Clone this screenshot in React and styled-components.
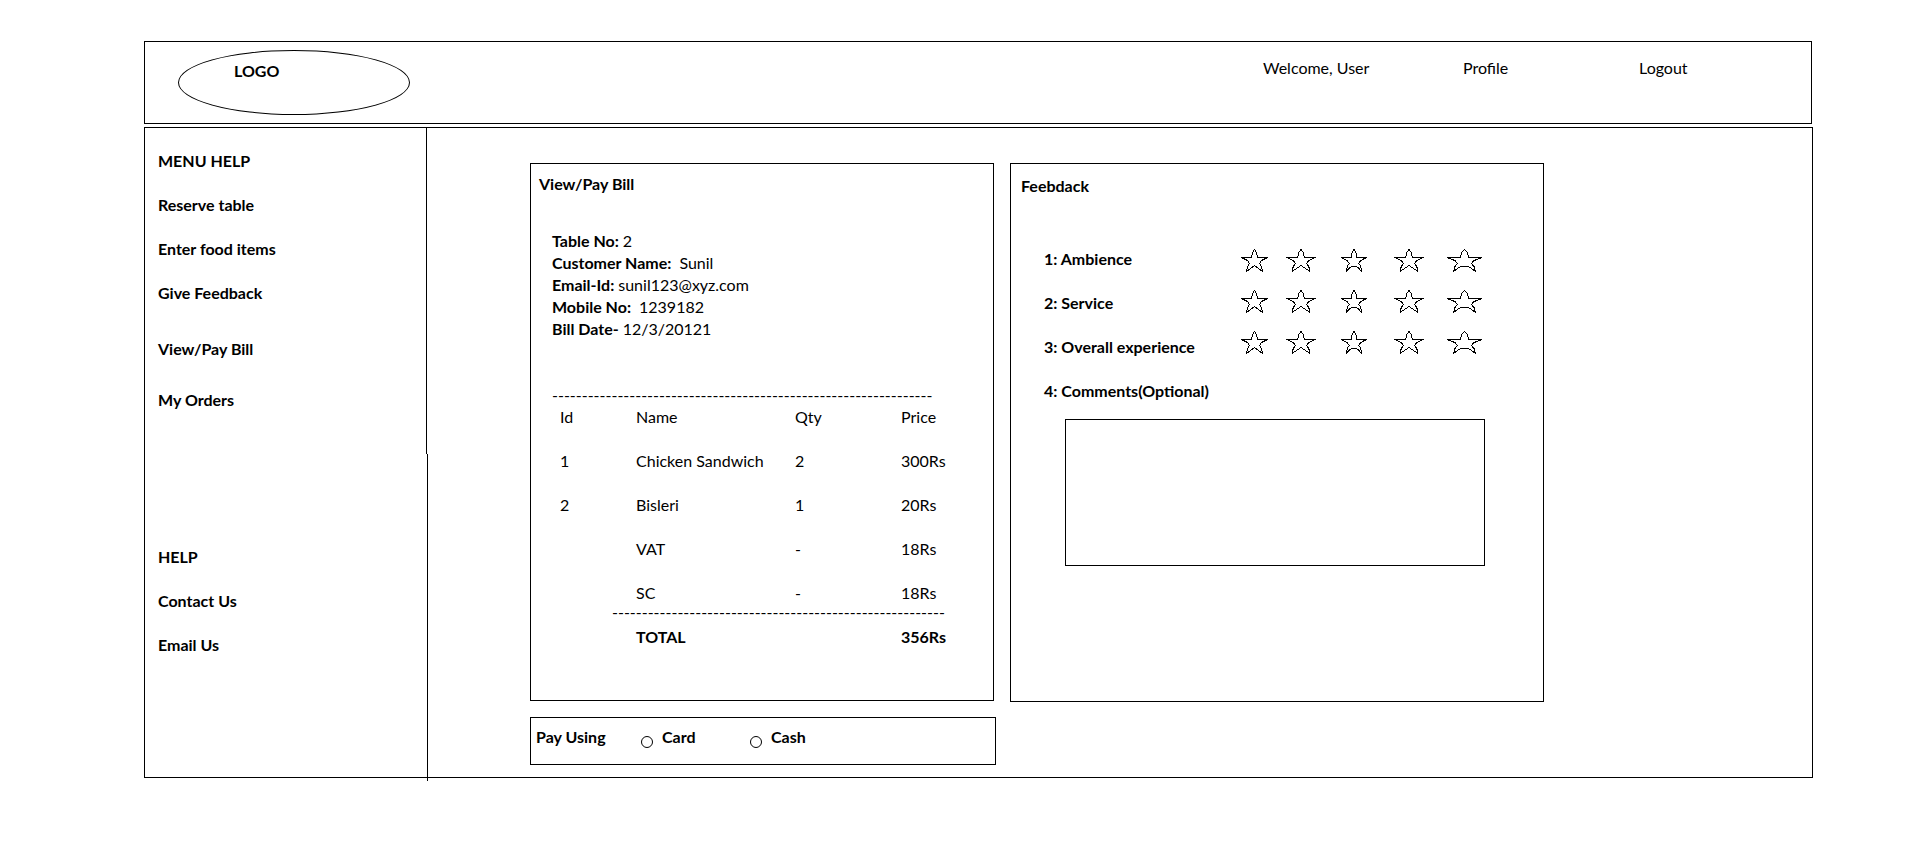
import React from "react";
import styled, { createGlobalStyle } from "styled-components";

const GlobalStyle = createGlobalStyle`
  *, *::before, *::after { box-sizing: border-box; }
  body {
    margin: 0;
    background: #fff;
    color: #000;
    font-family: Lato, "Liberation Sans", sans-serif;
    font-size: 16px;
    line-height: 22px;
  }
  h1, h2, ul, dl, dd, p { margin: 0; padding: 0; font-size: inherit; }
  ul { list-style: none; }
  a { color: inherit; text-decoration: none; }
`;

const Page = styled.div`
  display: flex;
  flex-direction: column;
  gap: 3px;
  padding: 41px 101px 61px 144px;
`;

const Header = styled.header`
  display: flex;
  justify-content: space-between;
  align-items: flex-start;
  min-height: 83px;
  margin-right: 1px;
  padding-left: 33px;
  border: 1px solid #000;
`;

const Logo = styled.h1`
  width: 232px;
  height: 65px;
  margin-top: 8px;
  padding: 9px 55px;
  border: 1px solid #000;
  border-radius: 50%;
  font-weight: 700;
`;

const UserNav = styled.nav`
  display: grid;
  grid-template-columns: 200px 176px 172px;
  padding-top: 15px;
`;

const Frame = styled.main`
  display: flex;
  align-items: stretch;
  border: 1px solid #000;
`;

const Sidebar = styled.aside`
  flex: none;
  display: flex;
  flex-direction: column;
  width: 283px;
  margin-bottom: -4px;
  font-weight: 700;
`;

const SideSection = styled.nav`
  width: ${(p) => (p.$narrow ? "282px" : "283px")};
  min-height: ${(p) => (p.$narrow ? "326px" : "327px")};
  padding: ${(p) => p.$top} 13px 0;
  border-right: 1px solid #000;
`;

const MenuList = styled.ul`
  display: flex;
  flex-direction: column;
  gap: ${(p) => p.$gap};
  margin-top: ${(p) => p.$space || 0};
`;

const Content = styled.div`
  flex: 1;
  display: grid;
  grid-template-columns: minmax(0, 466fr) minmax(0, 534fr) minmax(0, 254fr);
  column-gap: 14px;
  align-items: start;
  padding: 35px 0 12px 102px;
`;

const BillColumn = styled.div`
  display: flex;
  flex-direction: column;
  gap: 16px;
`;

const Panel = styled.section`
  min-height: 538px;
  border: 1px solid #000;
`;

const BillPanel = styled(Panel)`
  margin-right: 2px;
  padding: 9px 21px;
`;

const FeedbackPanel = styled(Panel)`
  min-height: 539px;
  padding: 11px 10px;
`;

const PanelTitle = styled.h2`
  font-weight: 700;
  margin-left: ${(p) => p.$outdent || 0};
`;

const Details = styled.dl`
  margin-top: 35px;
`;

const Detail = styled.div`
  display: flex;
  gap: ${(p) => (p.$wide ? "8px" : "4px")};

  dt { font-weight: 700; }
`;

const Dashes = styled.div`
  overflow: hidden;
  white-space: nowrap;
  margin-top: 44px;
`;

const BillTable = styled.table`
  width: 400px;
  table-layout: fixed;
  border-collapse: collapse;

  th, td {
    padding: 0 0 22px;
    text-align: left;
    vertical-align: top;
    font-weight: inherit;
    white-space: nowrap;
  }
`;

const IdColumn = styled.col`width: 60px;`;
const IndentColumn = styled.col`width: 24px;`;
const NameColumn = styled.col`width: 159px;`;
const QtyColumn = styled.col`width: 106px;`;

const IdCell = styled.td`
  && { padding-left: 8px; }
`;

const LastRow = styled.tr`
  && td { padding-bottom: 0; }
`;

const DashRow = styled.tr`
  && td {
    padding-bottom: 6px;
    line-height: 16px;
  }
`;

const TotalRow = styled.tr`
  font-weight: 700;
`;

const PayPanel = styled.form`
  display: flex;
  align-items: flex-start;
  min-height: 48px;
  padding: 8px 5px;
  border: 1px solid #000;
  font-weight: 700;
`;

const PayLegend = styled.span`
  width: 105px;
`;

const PayOption = styled.label`
  display: flex;
  gap: 9px;
  width: 109px;

  input {
    appearance: none;
    width: 12px;
    height: 12px;
    margin: 10px 0 0;
    border: 1px solid #000;
    border-radius: 50%;
  }
  input:checked { background: #000; }
`;

const Questions = styled.div`
  display: flex;
  padding: 51px 50px 0 23px;
  font-weight: 700;
`;

const QuestionList = styled.div`
  display: flex;
  flex-direction: column;
  gap: 22px;
  width: 207px;
  white-space: nowrap;
`;

const RatingList = styled.div`
  display: flex;
  flex-direction: column;
  gap: 17px;
`;

const Rating = styled.div`
  display: flex;
  align-items: center;
  height: 24px;
`;

const StarOption = styled.label`
  position: relative;
  display: block;
  width: ${(p) => p.$width}px;
  height: 23px;
  margin-right: ${(p) => p.$gap}px;

  svg { display: block; }
  input {
    position: absolute;
    inset: 0;
    width: 100%;
    height: 100%;
    margin: 0;
    opacity: 0;
  }
`;

const Comments = styled.textarea`
  display: block;
  width: calc(100% - 92px);
  height: 147px;
  margin: 17px 0 0 44px;
  border: 1px solid #000;
  background: #fff;
  font: inherit;
  resize: none;
`;

const stars = [
  { width: 27, gap: 18 },
  { width: 30, gap: 25 },
  { width: 26, gap: 27, flat: true },
  { width: 30, gap: 22 },
  { width: 37, gap: 0, flat: true },
];

const details = [
  ["Table No:", "2", false],
  ["Customer Name:", "Sunil", true],
  ["Email-Id:", "sunil123@xyz.com", false],
  ["Mobile No:", "1239182", true],
  ["Bill Date-", "12/3/20121", false],
];

const items = [
  ["1", "Chicken Sandwich", "2", "300Rs"],
  ["2", "Bisleri", "1", "20Rs"],
  ["", "VAT", "-", "18Rs"],
];

const questions = ["1: Ambience", "2: Service", "3: Overall experience"];

function Star({ width, flat }) {
  const base = flat
    ? "L17.5 18.5L15.5 17.5H11.5L9.5 18.5"
    : "L17.5 19.5L13.5 16.5L9.5 19.5";
  return (
    <svg
      width={width}
      height="23"
      viewBox="0 0 27 23"
      preserveAspectRatio="none"
      fill="none"
      stroke="#000"
      shapeRendering="crispEdges"
      aria-hidden="true"
    >
      <path
        vectorEffect="non-scaling-stroke"
        d={`M13.5 .5L15.500 3.500L16.500 8.500H26.500L20.500 11.500L18.500 14.500L20.500 17.500L21.500 22.500${base}L5.500 22.500L6.500 17.500L8.500 14.500L6.500 11.500L.5 8.500H10.500L11.500 3.500Z`}
      />
    </svg>
  );
}

function Links({ names, gap, space }) {
  return (
    <MenuList $gap={gap} $space={space}>
      {names.map((name) => (
        <li key={name}>
          <a href="#">{name}</a>
        </li>
      ))}
    </MenuList>
  );
}

export default function App() {
  return (
    <>
      <GlobalStyle />
      <Page>
        <Header>
          <Logo>LOGO</Logo>
          <UserNav>
            <span>Welcome, User</span>
            <a href="#">Profile</a>
            <a href="#">Logout</a>
          </UserNav>
        </Header>
        <Frame>
          <Sidebar>
            <SideSection $narrow $top="22px">
              <Links
                gap="22px"
                names={["MENU HELP", "Reserve table", "Enter food items", "Give Feedback"]}
              />
              <Links gap="29px" space="34px" names={["View/Pay Bill", "My Orders"]} />
            </SideSection>
            <SideSection $top="92px">
              <Links gap="22px" names={["HELP", "Contact Us", "Email Us"]} />
            </SideSection>
          </Sidebar>
          <Content>
            <BillColumn>
              <BillPanel>
                <PanelTitle $outdent="-13px">View/Pay Bill</PanelTitle>
                <Details>
                  {details.map(([label, value, wide]) => (
                    <Detail key={label} $wide={wide}>
                      <dt>{label}</dt>
                      <dd>{value}</dd>
                    </Detail>
                  ))}
                </Details>
                <Dashes aria-hidden="true">{"-".repeat(64)}</Dashes>
                <BillTable>
                  <colgroup>
                    <IdColumn />
                    <IndentColumn />
                    <NameColumn />
                    <QtyColumn />
                    <col />
                  </colgroup>
                  <thead>
                    <tr>
                      <IdCell as="th" colSpan={2}>Id</IdCell>
                      <th>Name</th>
                      <th>Qty</th>
                      <th>Price</th>
                    </tr>
                  </thead>
                  <tbody>
                    {items.map(([id, name, qty, price]) => (
                      <tr key={name}>
                        <IdCell colSpan={2}>{id}</IdCell>
                        <td>{name}</td>
                        <td>{qty}</td>
                        <td>{price}</td>
                      </tr>
                    ))}
                    <LastRow>
                      <td colSpan={2} />
                      <td>SC</td>
                      <td>-</td>
                      <td>18Rs</td>
                    </LastRow>
                    <DashRow aria-hidden="true">
                      <td />
                      <td colSpan={4}>{"-".repeat(56)}</td>
                    </DashRow>
                    <TotalRow>
                      <td colSpan={2} />
                      <td colSpan={2}>TOTAL</td>
                      <td>356Rs</td>
                    </TotalRow>
                  </tbody>
                </BillTable>
              </BillPanel>
              <PayPanel>
                <PayLegend>Pay Using</PayLegend>
                <PayOption>
                  <input type="radio" name="pay" value="card" />
                  Card
                </PayOption>
                <PayOption>
                  <input type="radio" name="pay" value="cash" />
                  Cash
                </PayOption>
              </PayPanel>
            </BillColumn>
            <FeedbackPanel>
              <PanelTitle>Feebdack</PanelTitle>
              <Questions>
                <QuestionList>
                  {questions.map((q, i) => (
                    <span key={q} id={`question-${i}`}>{q}</span>
                  ))}
                  <label htmlFor="comments">4: Comments(Optional)</label>
                </QuestionList>
                <RatingList>
                  {questions.map((q, i) => (
                    <Rating key={q} role="radiogroup" aria-labelledby={`question-${i}`}>
                      {stars.map(({ width, gap, flat }, n) => (
                        <StarOption key={n} $width={width} $gap={gap}>
                          <Star width={width} flat={flat} />
                          <input
                            type="radio"
                            name={`rating-${i}`}
                            value={n + 1}
                            aria-label={`${n + 1} of 5`}
                          />
                        </StarOption>
                      ))}
                    </Rating>
                  ))}
                </RatingList>
              </Questions>
              <Comments id="comments" />
            </FeedbackPanel>
          </Content>
        </Frame>
      </Page>
    </>
  );
}
